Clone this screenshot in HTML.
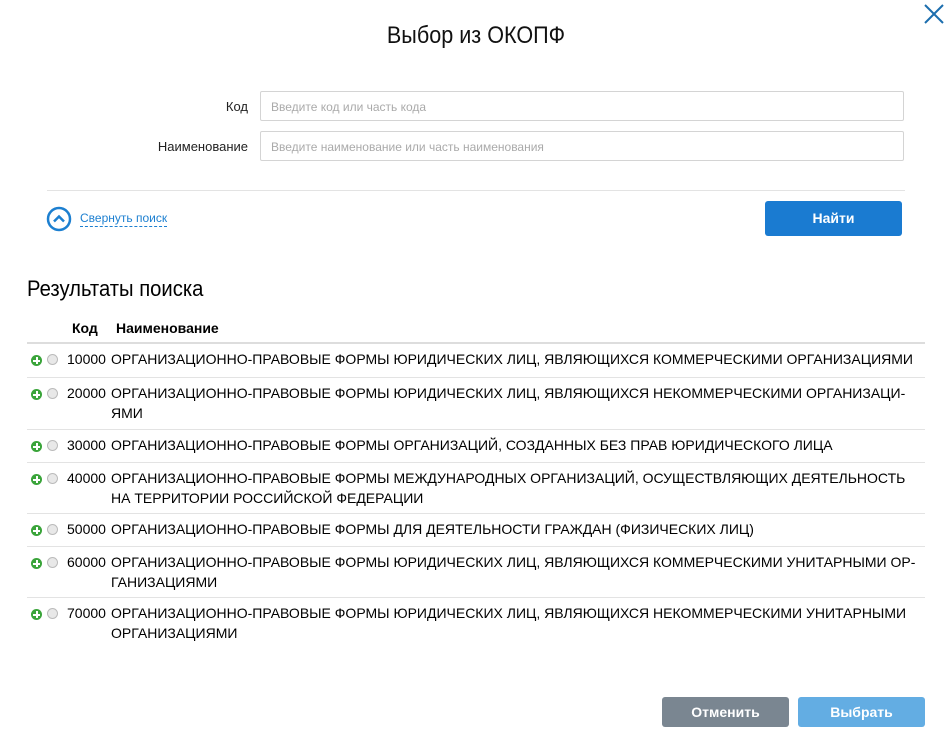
<!DOCTYPE html>
<html><head><meta charset="utf-8"><style>
body{margin:0;width:952px;height:745px;background:#fff;font-family:"Liberation Sans",Arial,sans-serif;color:#000;position:relative;overflow:hidden}
.a{position:absolute}
.title{left:0;width:952px;top:22px;text-align:center;font-size:24px;color:#111;transform:scaleX(0.9)}
.lbl{font-size:13px;text-align:right;width:220px;left:28px;color:#222}
.inp{left:260px;height:30px;border:1px solid #d4d4d4;border-radius:2px;font-size:12px;color:#aaa;line-height:30px;padding-left:10px;box-sizing:border-box;width:644px}
.btn{height:30px;border-radius:3px;color:#fff;font-size:14px;font-weight:bold;text-align:center;line-height:30px}
.row{left:27px;width:898px;border-top:1px solid #e3e3e3;font-size:14px;line-height:20px}
.row .ic{position:absolute;left:4px;top:11px;width:11px;height:11px;border-radius:50%;background:#3aa43a}
.row .ic:before{content:"";position:absolute;left:2px;top:4.5px;width:7px;height:2px;background:#fff}
.row .ic:after{content:"";position:absolute;left:4.5px;top:2px;width:2px;height:7px;background:#fff}
.row .rd{position:absolute;left:20px;top:10px;width:11px;height:11px;border-radius:50%;border:1px solid #bbb;background:#e8e8e8;box-sizing:border-box}
.row .c{position:absolute;left:40px;top:5px}
.row .t{position:absolute;left:84px;top:5px;width:810px}
</style></head><body>
<div class="a title">Выбор из ОКОПФ</div>
<svg class="a" style="left:924px;top:4px" width="20" height="20" viewBox="0 0 20 20"><path d="M1 1L19 19M19 1L1 19" stroke="#1c6eae" stroke-width="2"/></svg>
<div class="a lbl" style="top:99px">Код</div>
<div class="a inp" style="top:91px">Введите код или часть кода</div>
<div class="a lbl" style="top:139px">Наименование</div>
<div class="a inp" style="top:131px">Введите наименование или часть наименования</div>
<div class="a" style="left:47px;top:190px;width:858px;border-top:1px solid #e3e3e3"></div>
<svg class="a" style="left:46px;top:206px" width="26" height="26" viewBox="0 0 26 26"><circle cx="13" cy="13" r="11" fill="none" stroke="#1c7fd0" stroke-width="2.5"/><path d="M8 15.5L13 10.5L18 15.5" fill="none" stroke="#1c7fd0" stroke-width="2.5"/></svg>
<div class="a" style="left:80px;top:211px;font-size:12px;color:#1c7fd0;border-bottom:1px dashed #1c7fd0;padding-bottom:1px">Свернуть поиск</div>
<div class="a btn" style="left:765px;top:201px;width:137px;height:35px;line-height:35px;background:#1a7bd1">Найти</div>
<div class="a" style="left:27px;top:276px;font-size:22px;transform:scaleX(0.92);transform-origin:left">Результаты поиска</div>
<div class="a" style="left:72px;top:320px;font-size:14px;font-weight:bold">Код</div>
<div class="a" style="left:116px;top:320px;font-size:14px;font-weight:bold">Наименование</div>
<div class="a" style="left:27px;top:342px;width:898px;border-top:2px solid #ddd"></div>
<div class="a row" style="top:344px;height:33px;border-top:none"><span class="ic"></span><span class="rd"></span><span class="c">10000</span><span class="t">ОРГАНИЗАЦИОННО-ПРАВОВЫЕ ФОРМЫ ЮРИДИЧЕСКИХ ЛИЦ, ЯВЛЯЮЩИХСЯ КОММЕРЧЕСКИМИ ОРГАНИЗАЦИЯМИ</span></div>
<div class="a row" style="top:377px;height:52px"><span class="ic"></span><span class="rd"></span><span class="c">20000</span><span class="t">ОРГАНИЗАЦИОННО-ПРАВОВЫЕ ФОРМЫ ЮРИДИЧЕСКИХ ЛИЦ, ЯВЛЯЮЩИХСЯ НЕКОММЕРЧЕСКИМИ ОРГАНИЗАЦИ-<br>ЯМИ</span></div>
<div class="a row" style="top:429px;height:33px"><span class="ic"></span><span class="rd"></span><span class="c">30000</span><span class="t">ОРГАНИЗАЦИОННО-ПРАВОВЫЕ ФОРМЫ ОРГАНИЗАЦИЙ, СОЗДАННЫХ БЕЗ ПРАВ ЮРИДИЧЕСКОГО ЛИЦА</span></div>
<div class="a row" style="top:462px;height:51px"><span class="ic"></span><span class="rd"></span><span class="c">40000</span><span class="t">ОРГАНИЗАЦИОННО-ПРАВОВЫЕ ФОРМЫ МЕЖДУНАРОДНЫХ ОРГАНИЗАЦИЙ, ОСУЩЕСТВЛЯЮЩИХ ДЕЯТЕЛЬНОСТЬ<br>НА ТЕРРИТОРИИ РОССИЙСКОЙ ФЕДЕРАЦИИ</span></div>
<div class="a row" style="top:513px;height:33px"><span class="ic"></span><span class="rd"></span><span class="c">50000</span><span class="t">ОРГАНИЗАЦИОННО-ПРАВОВЫЕ ФОРМЫ ДЛЯ ДЕЯТЕЛЬНОСТИ ГРАЖДАН (ФИЗИЧЕСКИХ ЛИЦ)</span></div>
<div class="a row" style="top:546px;height:51px"><span class="ic"></span><span class="rd"></span><span class="c">60000</span><span class="t">ОРГАНИЗАЦИОННО-ПРАВОВЫЕ ФОРМЫ ЮРИДИЧЕСКИХ ЛИЦ, ЯВЛЯЮЩИХСЯ КОММЕРЧЕСКИМИ УНИТАРНЫМИ ОР-<br>ГАНИЗАЦИЯМИ</span></div>
<div class="a row" style="top:597px;height:51px"><span class="ic"></span><span class="rd"></span><span class="c">70000</span><span class="t">ОРГАНИЗАЦИОННО-ПРАВОВЫЕ ФОРМЫ ЮРИДИЧЕСКИХ ЛИЦ, ЯВЛЯЮЩИХСЯ НЕКОММЕРЧЕСКИМИ УНИТАРНЫМИ<br>ОРГАНИЗАЦИЯМИ</span></div>
<div class="a btn" style="left:662px;top:697px;width:127px;background:#7a8691">Отменить</div>
<div class="a btn" style="left:798px;top:697px;width:127px;background:#63ade3">Выбрать</div>
</body></html>
